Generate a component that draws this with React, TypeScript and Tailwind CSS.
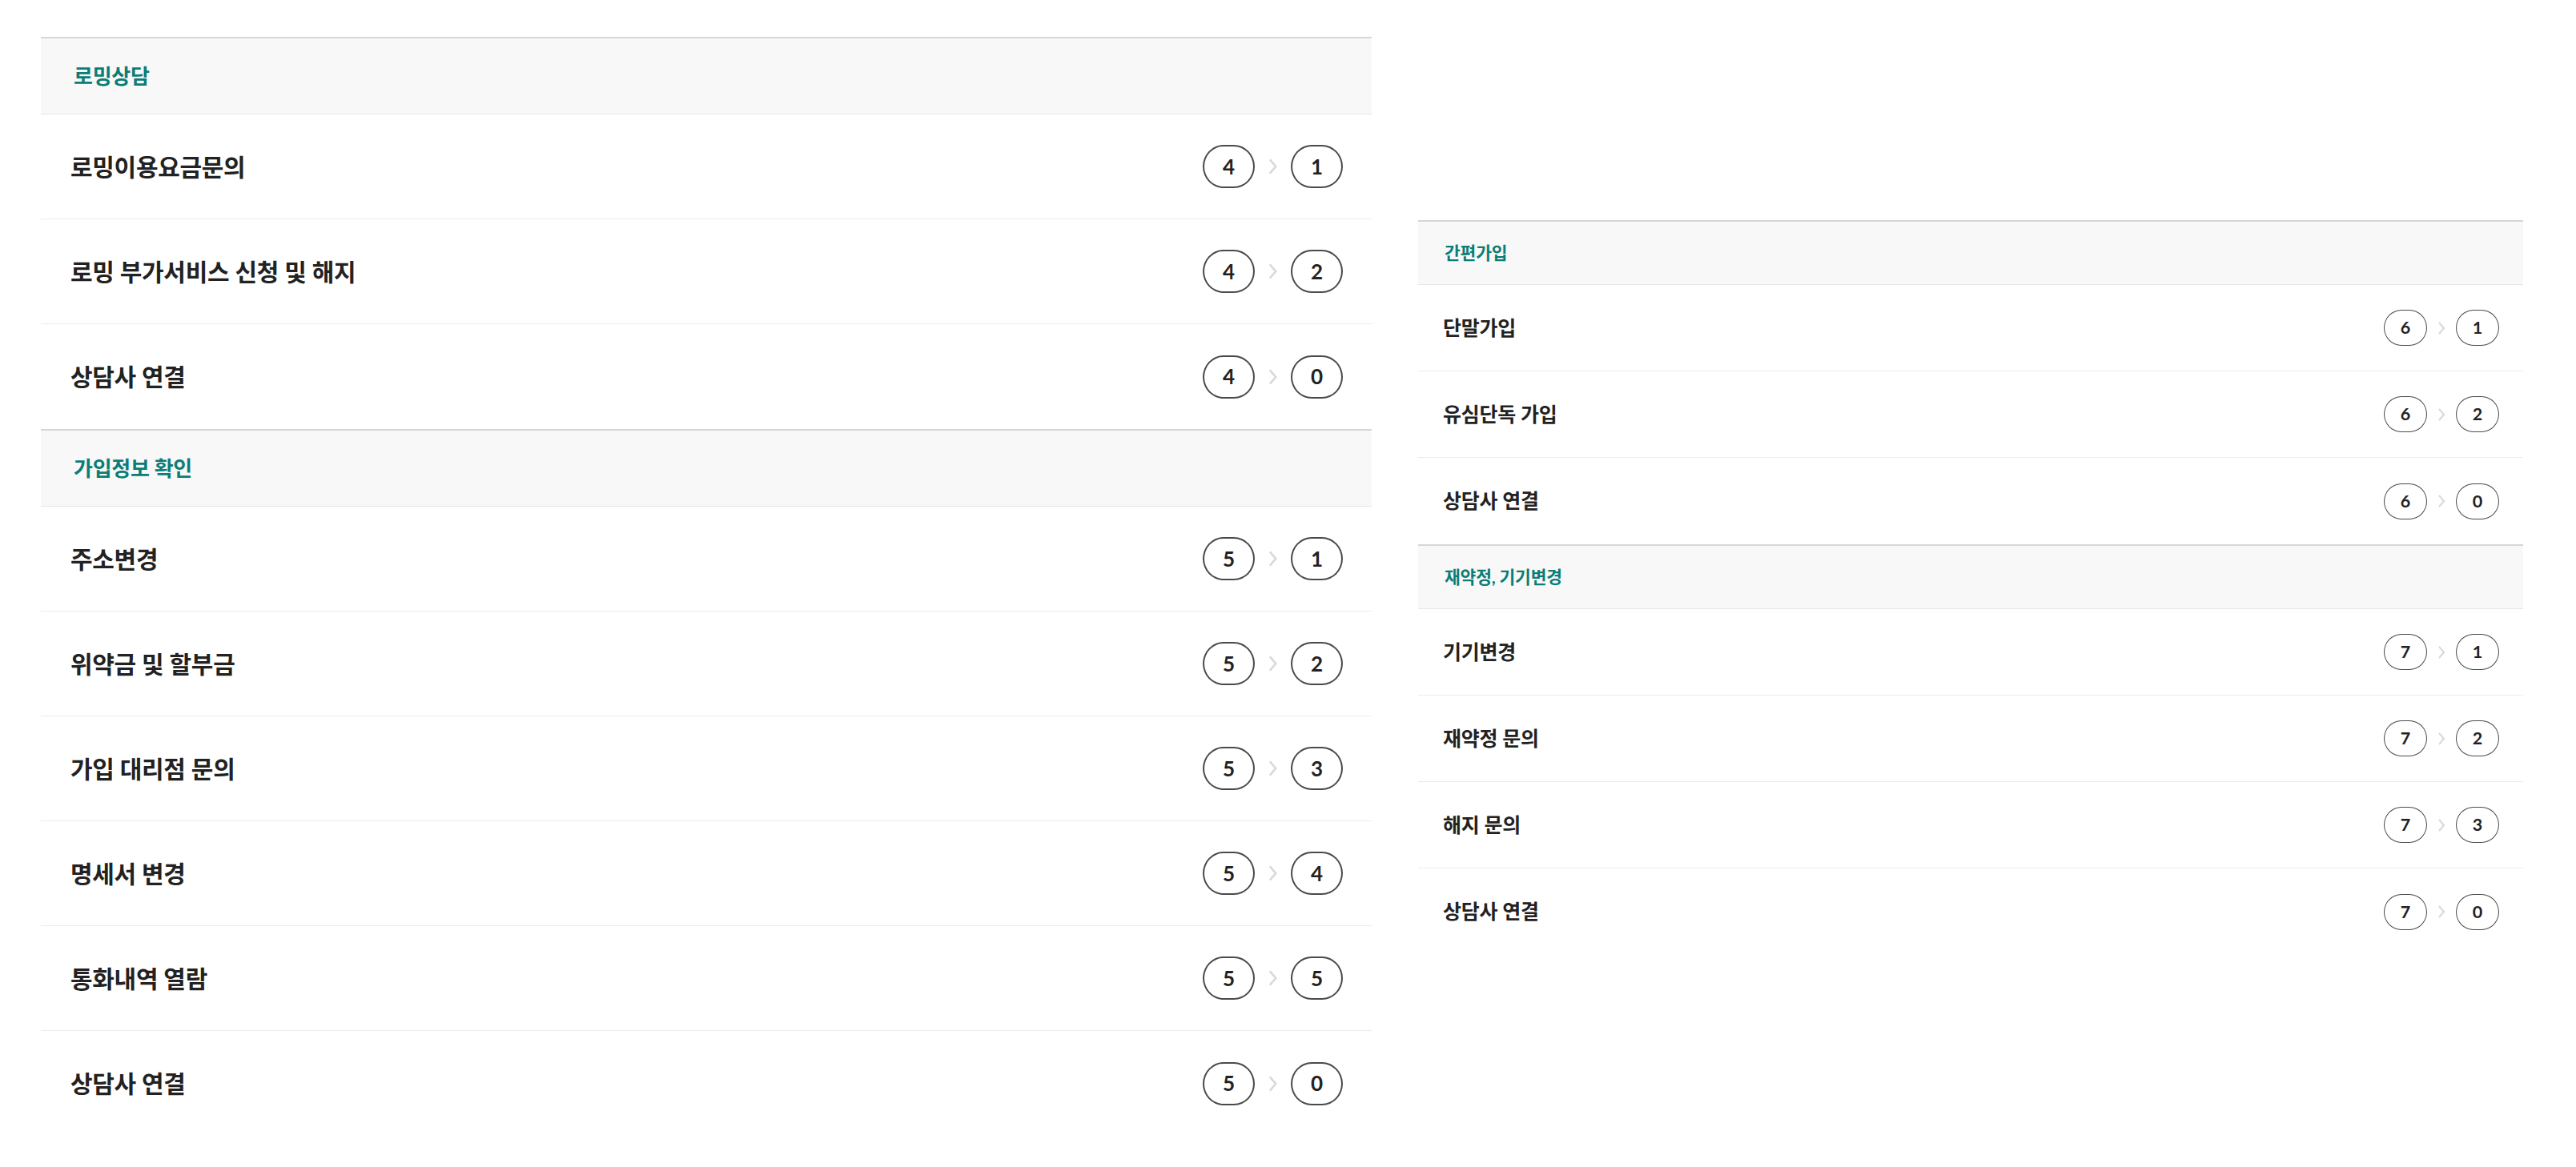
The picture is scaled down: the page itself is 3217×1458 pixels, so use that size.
import React from "react";

type Item = { label: string; from: number; to: number };
type Group = { title: string; items: Item[] };

const LEFT: Group[] = [
  {
    title: "로밍상담",
    items: [
      { label: "로밍이용요금문의", from: 4, to: 1 },
      { label: "로밍 부가서비스 신청 및 해지", from: 4, to: 2 },
      { label: "상담사 연결", from: 4, to: 0 },
    ],
  },
  {
    title: "가입정보 확인",
    items: [
      { label: "주소변경", from: 5, to: 1 },
      { label: "위약금 및 할부금", from: 5, to: 2 },
      { label: "가입 대리점 문의", from: 5, to: 3 },
      { label: "명세서 변경", from: 5, to: 4 },
      { label: "통화내역 열람", from: 5, to: 5 },
      { label: "상담사 연결", from: 5, to: 0 },
    ],
  },
];

const RIGHT: Group[] = [
  {
    title: "간편가입",
    items: [
      { label: "단말가입", from: 6, to: 1 },
      { label: "유심단독 가입", from: 6, to: 2 },
      { label: "상담사 연결", from: 6, to: 0 },
    ],
  },
  {
    title: "재약정, 기기변경",
    items: [
      { label: "기기변경", from: 7, to: 1 },
      { label: "재약정 문의", from: 7, to: 2 },
      { label: "해지 문의", from: 7, to: 3 },
      { label: "상담사 연결", from: 7, to: 0 },
    ],
  },
];

const SIZES = {
  lg: {
    header: "h-[97px] pl-[41px] text-[26px]",
    row: "h-[131px] pl-[37px] pr-[36px]",
    label: "text-[30px]",
    keys: "gap-[15px]",
    badge: "w-[65px] h-[54px] rounded-[26px/27px] text-[26px] border-2",
    chevron: "w-[15px] h-[22px]",
  },
  sm: {
    header: "h-[81px] pl-[33px] text-[21.5px]",
    row: "h-[108px] pl-[31px] pr-[30px]",
    label: "text-[25px]",
    keys: "gap-[12px]",
    badge: "w-[54px] h-[45px] rounded-[22px/22.5px] text-[21.5px] border-[1.5px]",
    chevron: "w-[12px] h-[18px]",
  },
};

function Chevron({ className }: { className: string }) {
  return (
    <svg viewBox="0 0 12 18" className={className} fill="none">
      <polyline points="3,2 9,9 3,16" stroke="#d9d9d9" strokeWidth="2.2" />
    </svg>
  );
}

function Panel({ groups, size, className }: { groups: Group[]; size: "lg" | "sm"; className: string }) {
  const s = SIZES[size];
  return (
    <div className={className}>
      {groups.map((g) => (
        <section key={g.title}>
          <h2
            className={`flex items-center border-t-2 border-b border-t-[#d6d6d6] border-b-[#e6e6e6] bg-[#f8f8f8] font-bold tracking-[-0.01em] text-[#0b7d77] ${s.header}`}
          >
            {g.title}
          </h2>
          <ul>
            {g.items.map((it) => (
              <li
                key={it.label}
                className={`flex items-center justify-between border-b border-[#ececec] last:border-b-0 ${s.row}`}
              >
                <span className={`font-semibold tracking-[-0.01em] text-[#222] ${s.label}`}>{it.label}</span>
                <span className={`flex items-center ${s.keys}`}>
                  <span
                    className={`flex items-center justify-center border-[#4a4a4a] font-bold text-[#222] ${s.badge}`}
                  >
                    {it.from}
                  </span>
                  <Chevron className={s.chevron} />
                  <span
                    className={`flex items-center justify-center border-[#4a4a4a] font-bold text-[#222] ${s.badge}`}
                  >
                    {it.to}
                  </span>
                </span>
              </li>
            ))}
          </ul>
        </section>
      ))}
    </div>
  );
}

export default function App() {
  return (
    <div className="flex min-h-[1458px] items-start gap-[58px] bg-white pl-[51px] pt-[46px] font-['Lato','Noto_Sans_CJK_KR',sans-serif]">
      <Panel groups={LEFT} size="lg" className="w-[1662px] shrink-0" />
      <Panel groups={RIGHT} size="sm" className="mt-[229px] w-[1380px] shrink-0" />
    </div>
  );
}
